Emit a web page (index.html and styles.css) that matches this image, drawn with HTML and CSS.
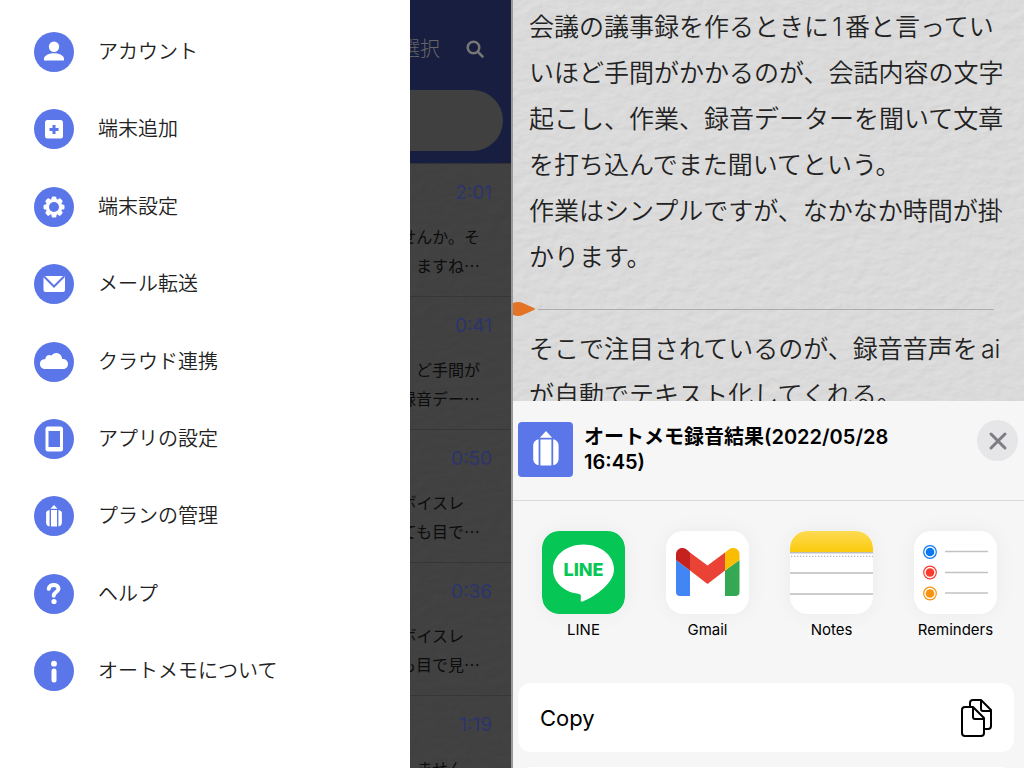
FILE: index.html
```html
<!DOCTYPE html>
<html lang="ja">
<head>
  <meta charset="UTF-8">
  <meta name="viewport" content="width=device-width, initial-scale=1">
  <title>オートメモ</title>
  <link rel="stylesheet" href="styles.css">
</head>
<body>

<div class="screens">

  <!-- メニュー画面 -->
  <section class="screen menu-screen">
    <nav class="drawer">
      <ul class="menu">
        <li><a href="#account">
          <svg class="menu-icon" viewBox="0 0 40 40"><circle cx="20" cy="20" r="20"/><g class="w"><circle cx="20" cy="14.800" r="5.200"/><path d="M10 28.500v-1.500c0-4 6-5.700 10-5.700s10 1.700 10 5.700v1.500z"/></g></svg>
          アカウント</a></li>
        <li><a href="#add">
          <svg class="menu-icon" viewBox="0 0 40 40"><circle cx="20" cy="20" r="20"/><rect class="w" x="11" y="11" width="18" height="18.500" rx="2.500"/><path class="b" d="M20 16v9M15.500 20.500h9"/></svg>
          端末追加</a></li>
        <li><a href="#device">
          <svg class="menu-icon" viewBox="0 0 40 40"><circle cx="20" cy="20" r="20"/><g class="w"><g id="teeth"><rect x="17.500" y="9.500" width="5" height="21" rx="1.500"/><rect x="9.500" y="17.500" width="21" height="5" rx="1.500"/></g><use href="#teeth" transform="rotate(45 20 20)"/><circle cx="20" cy="20" r="8.300"/></g><circle cx="20" cy="20" r="5"/></svg>
          端末設定</a></li>
        <li><a href="#mail">
          <svg class="menu-icon" viewBox="0 0 40 40"><circle cx="20" cy="20" r="20"/><rect class="w" x="9.500" y="12" width="21.500" height="16" rx="2"/><path class="b thin" d="M10 12.500l10 10 10-10"/></svg>
          メール転送</a></li>
        <li><a href="#cloud">
          <svg class="menu-icon" viewBox="0 0 40 40"><circle cx="20" cy="20" r="20"/><path class="w" d="M10 27a5 5 0 0 1-.5-9.700c1-.2 1.400 0 1.800-.2.200-3.600 3.700-5.200 6.200-3.500 2.700-4.500 10.500-3 10.700 3.500 3.500-.1 5.800 2 5.800 4.800 0 3-2.200 5.100-5 5.100z"/></svg>
          クラウド連携</a></li>
        <li><a href="#app">
          <svg class="menu-icon" viewBox="0 0 40 40"><circle cx="20" cy="20" r="20"/><rect class="w" x="11.500" y="7.500" width="17.500" height="25" rx="2.500"/><rect x="14.500" y="12" width="11.500" height="16"/></svg>
          アプリの設定</a></li>
        <li><a href="#plan">
          <svg class="menu-icon" viewBox="0 0 40 40"><circle cx="20" cy="20" r="20"/><path class="w" d="M20 9l3.600 3.700h-7.200zM17 14h6v16.500h-6zM15.600 14v16.500c-2.300-.4-3.500-1.700-3.500-3.700V17c0-1.600 1.300-2.600 3.500-3zM24.400 14v16.500c2.300-.4 3.500-1.700 3.500-3.700V17c0-1.600-1.300-2.600-3.500-3z"/></svg>
          プランの管理</a></li>
        <li><a href="#help">
          <svg class="menu-icon" viewBox="0 0 40 40"><circle cx="20" cy="20" r="20"/><path class="l" d="M14.700 14.800c.4-5.200 9.800-5.100 9.800 0 0 3.600-4.800 3.200-4.800 6.900"/><circle class="w" cx="20" cy="27.500" r="2.600"/></svg>
          ヘルプ</a></li>
        <li><a href="#about">
          <svg class="menu-icon" viewBox="0 0 40 40"><circle cx="20" cy="20" r="20"/><circle class="w" cx="20" cy="12.700" r="2.900"/><rect class="w" x="17.500" y="17.500" width="5" height="14" rx="2.500"/></svg>
          オートメモについて</a></li>
      </ul>
    </nav>

    <div class="behind paper">
      <div class="behind-head">
        <div class="tools">
          <span>選択</span>
          <svg class="search-icon" viewBox="0 0 18 18"><circle cx="7.500" cy="7.500" r="5.800"/><path d="M12 12l4.500 4.500"/></svg>
        </div>
        <div class="search-pill"></div>
      </div>
      <ul class="memos">
        <li><time>2:01</time><p>せんか。そ</p><p>ますね…</p></li>
        <li><time>0:41</time><p>ど手間が</p><p>録音デー…</p></li>
        <li><time>0:50</time><p>ボイスレ　</p><p>ても目で…</p></li>
        <li><time>0:36</time><p>ボイスレ　</p><p>も目で見…</p></li>
        <li><time>1:19</time><p>ません　</p></li>
      </ul>
    </div>
  </section>

  <!-- 共有画面 -->
  <section class="screen share-screen">
    <article class="transcript paper">
      <p>会議の議事録を作るときに1番と言っていいほど手間がかかるのが、会話内容の文字起こし、作業、録音データーを聞いて文章を打ち込んでまた聞いてという。<br>作業はシンプルですが、なかなか時間が掛かります。</p>
      <div class="marker">
        <svg viewBox="0 0 23 14"><path d="M0 1C5-.8 8 0 12 2l9 4c1.300.6 1.300 1.400 0 2l-9 4c-4 2-7 2.800-12 1z"/></svg>
        <hr>
      </div>
      <p>そこで注目されているのが、録音音声をaiが自動でテキスト化してくれる。</p>
    </article>

    <div class="sheet">
      <header class="sheet-head">
        <svg class="memo-logo" viewBox="0 0 55 55"><rect width="55" height="55" rx="4"/><path class="w" d="M28 9l6.200 6.800H21.800zM22.400 17.500h11v26h-11zM20.600 17.300v26c-3.500-.8-5.400-3-5.400-6.300V23.500c0-3.200 1.900-5.400 5.400-6.200zM35.200 17.300v26c3.500-.8 5.400-3 5.400-6.300V23.500c0-3.200-1.900-5.400-5.400-6.200z"/></svg>
        <h1>オートメモ録音結果(2022/05/28<br>16:45)</h1>
        <button class="close" type="button" aria-label="閉じる">
          <svg viewBox="0 0 20 20"><path d="M3 3l14 14M17 3L3 17"/></svg>
        </button>
      </header>

      <div class="apps">
        <button class="app" type="button">
          <svg viewBox="0 0 83 83"><rect width="83" height="83" rx="17" fill="#06c755"/><path fill="#fff" d="M41.500 13.500c-17 0-30.500 11-30.500 24.700 0 12.500 10.500 22.800 25.200 24.500 2.600.4 3 1.400 2.600 4.500-.3 2.500-.2 4.200 2.600 3C48 67.500 72 54.500 72 38.200c0-13.700-13.500-24.700-30.500-24.700z"/><text class="line-text" x="41.500" y="45" text-anchor="middle">LINE</text></svg>
          <span>LINE</span>
        </button>
        <button class="app" type="button">
          <svg viewBox="0 0 83 83"><rect width="83" height="83" rx="17" fill="#fff"/><path fill="#4285f4" d="M10 29l14 10.500V65H14a4 4 0 0 1-4-4z"/><path fill="#34a853" d="M73.500 29l-14.500 10.500V65h10.500a4 4 0 0 0 4-4z"/><path fill="#ea4335" d="M24 21.500l17.500 13 17.500-13v18L41.500 53 24 39.500z"/><path fill="#c5221f" d="M10 29v-5.500c0-6 6.500-8.500 11.200-4.500l2.800 2.500v18z"/><path fill="#fbbc04" d="M73.500 29v-5.500c0-6-6.500-8.500-11.200-4.500L59 21.500v18z"/></svg>
          <span>Gmail</span>
        </button>
        <button class="app" type="button">
          <svg viewBox="0 0 83 83">
            <defs>
              <linearGradient id="yellow" x1="0" y1="0" x2="0" y2="1"><stop offset="0" stop-color="#fddb55"/><stop offset="1" stop-color="#fbcb0b"/></linearGradient>
              <clipPath id="tile"><rect width="83" height="83" rx="17"/></clipPath>
            </defs>
            <g clip-path="url(#tile)"><rect width="83" height="83" fill="#fff"/><rect width="83" height="21" fill="url(#yellow)"/><path stroke="#bcbcbc" stroke-width="1.500" d="M0 21.700h83M0 42h83M0 63h83"/><path stroke="#b5b5b5" stroke-width="1.300" stroke-dasharray="1.300 1.700" d="M1 25.300h82"/></g>
          </svg>
          <span>Notes</span>
        </button>
        <button class="app" type="button">
          <svg viewBox="0 0 83 83"><rect width="83" height="83" rx="17" fill="#fff"/><path stroke="#c2c2c4" stroke-width="1.500" d="M31 20.500h43M31 41.500h43M31 62h43"/>
            <g fill="#0a78f5"><circle cx="16" cy="21" r="4.300"/><circle class="ring" cx="16" cy="21" r="6.300" stroke="#0a78f5"/></g>
            <g fill="#fb3b30"><circle cx="16" cy="41.500" r="4.300"/><circle class="ring" cx="16" cy="41.500" r="6.300" stroke="#fb3b30"/></g>
            <g fill="#fa9410"><circle cx="16" cy="62.500" r="4.300"/><circle class="ring" cx="16" cy="62.500" r="6.300" stroke="#fa9410"/></g></svg>
          <span>Reminders</span>
        </button>
      </div>

      <div class="actions">
        <button class="action" type="button">
          Copy
          <svg viewBox="0 0 32 38"><path d="M9 8V4a3 3 0 0 1 3-3h8l10 10v16a3 3 0 0 1-3 3h-4M20 1v9a2 2 0 0 0 2 2h8"/><path d="M4 8h8l11 11v15a3 3 0 0 1-3 3H4a3 3 0 0 1-3-3V11a3 3 0 0 1 3-3zM12 8v10a2 2 0 0 0 2 2h9"/></svg>
        </button>
        <button class="action" type="button" aria-label="その他"></button>
      </div>
    </div>
  </section>

</div>

</body>
</html>
```

FILE: styles.css
```css
* {
  box-sizing: border-box;
}

body {
  margin: 0;
  font-family: Inter, "Noto Sans CJK JP", sans-serif;
  color: #222;
  text-autospace: normal;
}

ul, p, h1 {
  margin: 0;
  padding: 0;
  list-style: none;
}

button {
  border: none;
  padding: 0;
  background: none;
  font-family: inherit;
  color: #000;
  cursor: pointer;
}

svg {
  display: block;
  flex: none;
}

.w {
  fill: #fff;
}

.screens {
  display: grid;
  grid-template-columns: calc(50% - 1px) 1fr;
  height: 100vh;
  overflow: hidden;
}

.screen {
  display: flex;
  min-width: 0;
  min-height: 0;
}

.paper {
  background-color: #dadada;
  background-image: url("data:image/svg+xml,%3Csvg xmlns='http://www.w3.org/2000/svg' width='300' height='300'%3E%3Cfilter id='p' x='0' y='0' width='100%25' height='100%25'%3E%3CfeTurbulence type='fractalNoise' baseFrequency='.07 .11' numOctaves='3' seed='4' stitchTiles='stitch'/%3E%3CfeDiffuseLighting color-interpolation-filters='sRGB' lighting-color='%23fff' surfaceScale='.9'%3E%3CfeDistantLight azimuth='235' elevation='59'/%3E%3C/feDiffuseLighting%3E%3C/filter%3E%3Crect width='300' height='300' fill='%23dadada'/%3E%3Crect width='300' height='300' opacity='.22' filter='url(%23p)'/%3E%3C/svg%3E");
}

/* drawer */

.drawer {
  flex: 0 0 410px;
  max-width: 81%;
  padding: 32px 34px 77px;
  background: #fff;
}

.menu {
  display: flex;
  flex-direction: column;
  justify-content: space-between;
  height: 100%;
}

.menu a {
  display: flex;
  align-items: center;
  gap: 24px;
  font-size: 20px;
  font-weight: 350;
  line-height: 40px;
  color: #222;
  text-decoration: none;
}

.menu-icon {
  width: 40px;
  height: 40px;
  fill: #5b76e8;
}

.menu-icon .b {
  fill: none;
  stroke: #5b76e8;
  stroke-width: 3;
}

.menu-icon .thin {
  stroke-width: 2;
}

.menu-icon .l {
  fill: none;
  stroke: #fff;
  stroke-width: 4;
  stroke-linecap: round;
}

/* dimmed list behind the drawer */

.behind {
  flex: 1;
  min-width: 0;
  overflow: hidden;
  box-shadow: inset 0 0 0 1000px rgba(0, 0, 0, 0.7);
}

.behind-head {
  height: 164px;
  padding: 34px 8px 0 0;
  background: #171e3f;
  border-bottom: 1px solid #333;
}

.tools {
  display: flex;
  justify-content: flex-end;
  align-items: center;
  gap: 26px;
  padding-right: 19px;
  font-size: 20px;
  font-weight: 300;
  line-height: 30px;
  white-space: nowrap;
  color: #666;
}

.search-icon {
  width: 18px;
  height: 18px;
  fill: none;
  stroke: #777;
  stroke-width: 2.5;
  stroke-linecap: round;
}

.search-pill {
  height: 61px;
  margin-top: 26px;
  background: #404040;
  border-radius: 0 31px 31px 0;
}

.memos li {
  display: flex;
  flex-direction: column;
  align-items: flex-end;
  height: 133px;
  padding: 14px 31px 0 0;
  border-bottom: 1px solid #363636;
  font-family: "Noto Sans CJK JP", sans-serif;
  font-size: 16px;
  line-height: 29px;
  white-space: pre;
  color: #0c0c0c;
}

.memos time {
  margin: 0 -12px 14px 0;
  font-family: Inter, sans-serif;
  font-size: 19px;
  line-height: 30px;
  color: #2c346e;
}

/* transcript */

.share-screen {
  flex-direction: column;
  border-left: 2px solid #999;
  background: #f6f6f6;
}

.transcript {
  flex: 1;
  min-height: 0;
  overflow: hidden;
  padding: 4px 16px 0;
  font-size: 25px;
  font-weight: 350;
  line-height: 46px;
}

.marker {
  display: flex;
  align-items: center;
  gap: 2px;
  margin: 0 14px 0 -16px;
  height: 46px;
  padding-top: 12px;
}

.marker svg {
  width: 23px;
  height: 14px;
  fill: #e57325;
}

.marker hr {
  flex: 1;
  margin: 0;
  border: none;
  border-top: 1px solid #acacac;
}

/* share sheet */

.sheet {
  flex: none;
  background: #f6f6f6;
}

.sheet-head {
  display: flex;
  align-items: flex-start;
  height: 100px;
  padding: 21px 6px 0 5px;
  border-bottom: 1px solid #dadada;
}

.memo-logo {
  width: 55px;
  height: 55px;
  fill: #5b76e8;
}

.sheet-head h1 {
  flex: 1;
  padding: 3px 0 0 11px;
  font-size: 20px;
  font-weight: 600;
  line-height: 25px;
  color: #000;
  text-autospace: no-autospace;
}

.close {
  display: flex;
  align-items: center;
  justify-content: center;
  width: 41px;
  height: 41px;
  margin-top: -2px;
  border-radius: 50%;
  background: #e6e6e8;
}

.close svg {
  width: 20px;
  height: 20px;
  fill: none;
  stroke: #7e7e82;
  stroke-width: 3;
  stroke-linecap: round;
}

.apps {
  display: flex;
  gap: 41px;
  padding: 30px 0 43px 29px;
}

.app {
  width: 83px;
  font-size: 15px;
  line-height: 20px;
}

.app svg {
  width: 83px;
  height: 83px;
  margin-bottom: 6px;
  border-radius: 17px;
  box-shadow: 0 0 20px rgba(0, 0, 0, 0.05);
}

.line-text {
  font-size: 18px;
  font-weight: 800;
  fill: #06c755;
}

.ring {
  fill: none;
  stroke-width: 1.2;
}

.actions {
  max-height: 85px;
  overflow: hidden;
  padding: 0 10px 0 5px;
}

.action {
  display: flex;
  align-items: center;
  justify-content: space-between;
  width: 100%;
  height: 69px;
  margin-bottom: 15px;
  padding: 0 21px 0 22px;
  border-radius: 13px;
  background: #fff;
  font-size: 22px;
}

.action svg {
  width: 32px;
  height: 38px;
  fill: none;
  stroke: #000;
  stroke-width: 2;
  stroke-linejoin: round;
}
```
